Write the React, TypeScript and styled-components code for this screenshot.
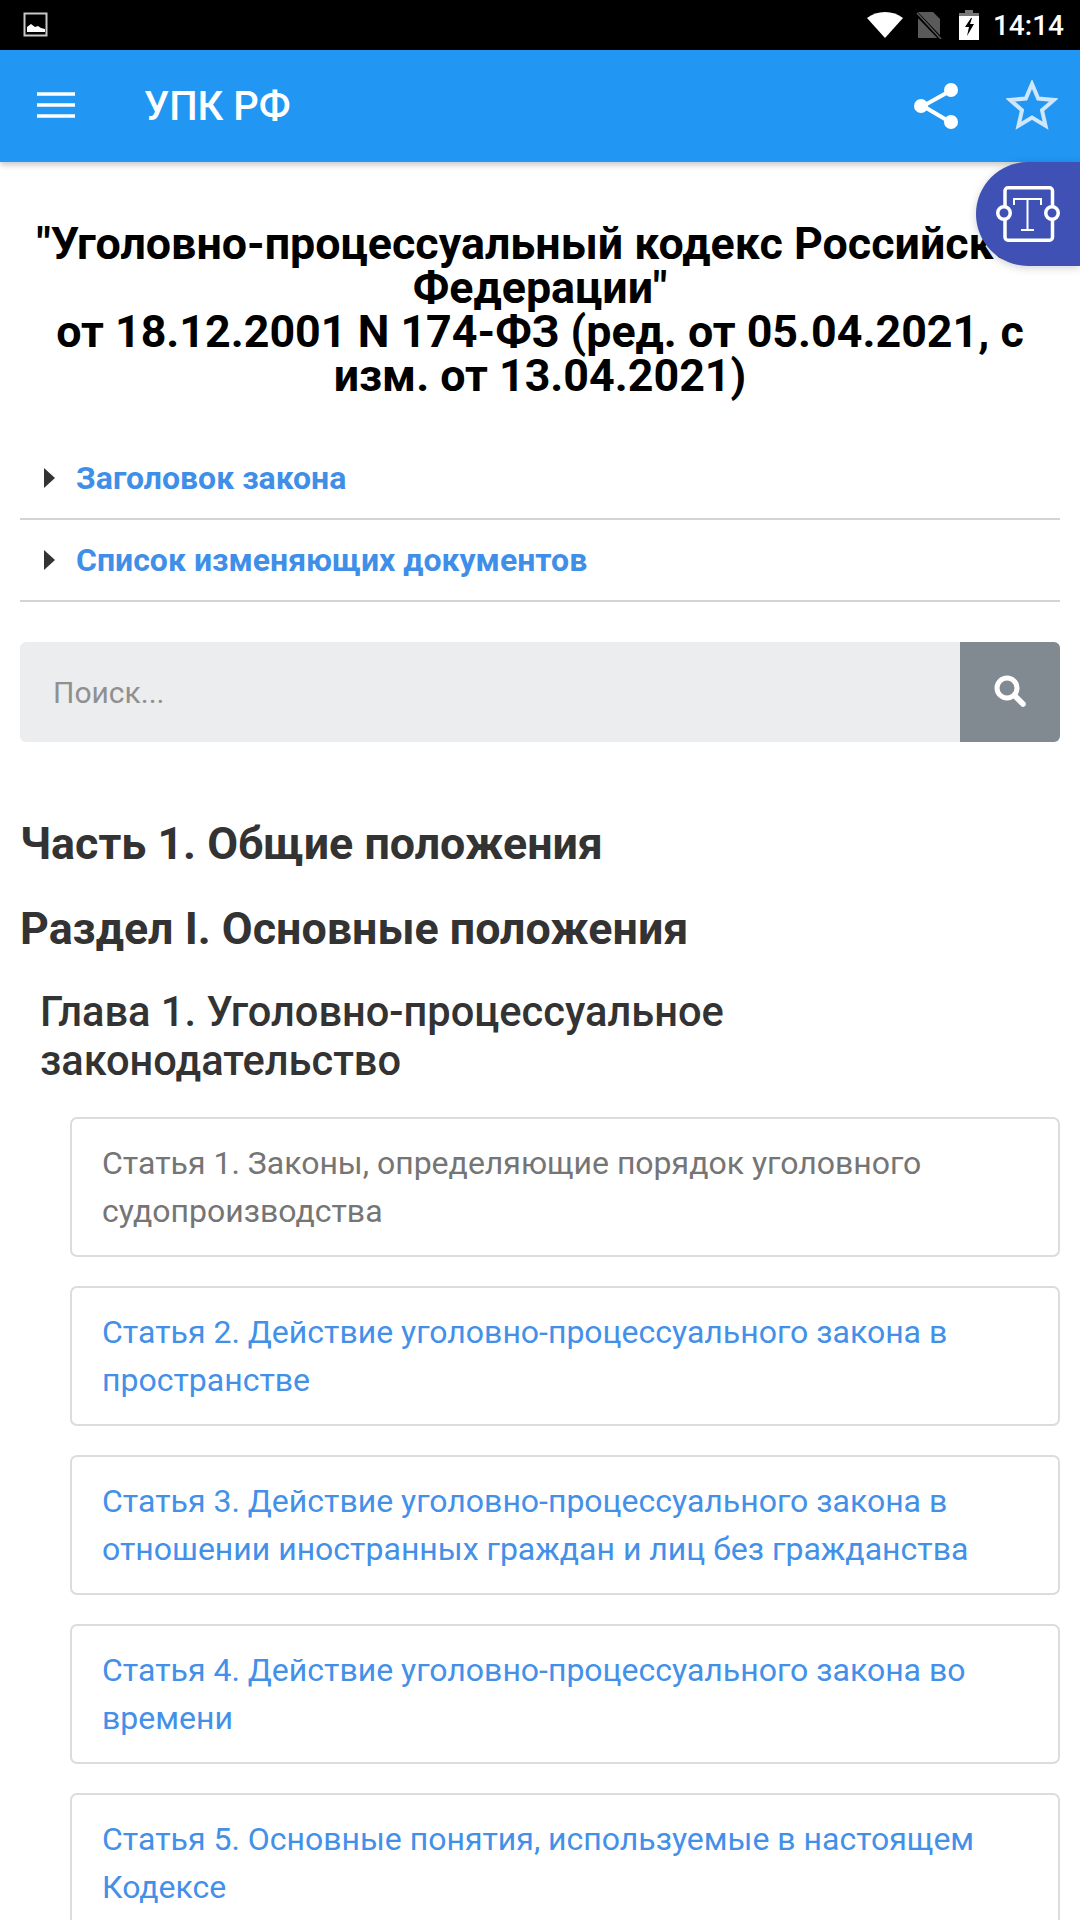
import React from "react";
import styled, { createGlobalStyle } from "styled-components";

const GlobalStyle = createGlobalStyle`
  html, body {
    margin: 0;
    padding: 0;
    background: #fff;
    font-family: Roboto, "Noto Sans", sans-serif;
  }
  * { box-sizing: border-box; }
`;

const Screen = styled.div`
  width: 1080px;
  height: 1920px;
  position: relative;
  overflow: hidden;
  background: #fff;
`;

const StatusBar = styled.div`
  height: 50px;
  background: #000;
  display: flex;
  align-items: center;
  padding: 0 16px 0 23px;
  color: #fff;
`;

const StatusRight = styled.div`
  margin-left: auto;
  display: flex;
  align-items: center;
`;

const StatusGlyph = styled.svg<{ $gap?: number }>`
  margin-left: ${(p) => p.$gap ?? 0}px;
`;

const Clock = styled.span`
  font-size: 28px;
  font-weight: 500;
  margin-left: 14px;
`;

const AppBar = styled.header`
  height: 112px;
  background: #2196f3;
  display: flex;
  align-items: center;
  padding: 0 0 0 37px;
  box-shadow: 0 3px 6px rgba(0, 0, 0, 0.22);
  position: relative;
  z-index: 2;
`;

const AppTitle = styled.div`
  color: #fff;
  font-size: 40px;
  font-weight: 500;
  margin-left: 69px;
`;

const AppActions = styled.div`
  margin-left: auto;
  display: flex;
  align-items: center;
  gap: 46px;
  padding-right: 22px;
`;

const StarGlyph = styled.svg`
  margin-top: -3px;
`;

const FloatingButton = styled.div`
  position: absolute;
  top: 162px;
  right: 0;
  width: 104px;
  height: 104px;
  background: #3f51b5;
  border-radius: 52px 0 0 52px;
  box-shadow: 0 2px 8px rgba(0, 0, 0, 0.18);
  display: flex;
  align-items: center;
  padding-left: 20px;
  z-index: 3;
`;

const Content = styled.main`
  padding: 0 20px;
`;

const DocTitle = styled.h1`
  margin: 60px 0 0;
  font-size: 44.8px;
  line-height: 44px;
  font-weight: 700;
  color: #000;
  text-align: center;
`;

const Spoiler = styled.div`
  height: 82px;
  border-bottom: 2px solid #d4d4d4;
  display: flex;
  align-items: center;
  padding: 0 0 0 24px;
`;

const SpoilerList = styled.div`
  margin-top: 40px;
`;

const Arrow = styled.span`
  width: 0;
  height: 0;
  border-style: solid;
  border-width: 10px 0 10px 11px;
  border-color: transparent transparent transparent #333;
  margin-right: 21px;
`;

const SpoilerLink = styled.span`
  color: #3f8fe8;
  font-size: 32px;
  font-weight: 700;
`;

const SearchBox = styled.div`
  margin-top: 40px;
  height: 100px;
  display: flex;
  border-radius: 6px;
  overflow: hidden;
`;

const SearchField = styled.div`
  flex: 1;
  background: #ecedef;
  color: #909090;
  font-size: 30px;
  display: flex;
  align-items: center;
  padding-left: 33px;
`;

const SearchButton = styled.div`
  width: 100px;
  background: #828a91;
  display: flex;
  align-items: center;
  justify-content: center;
`;

const PartHeading = styled.h2<{ $top: number }>`
  margin: ${(p) => p.$top}px 0 0;
  font-size: 44.8px;
  line-height: 48px;
  font-weight: 700;
  color: #333;
`;

const ChapterHeading = styled.h3`
  margin: 34px 0 0;
  padding-left: 20px;
  width: 800px;
  font-size: 41.6px;
  line-height: 49px;
  font-weight: 500;
  color: #333;
`;

const ArticleList = styled.div`
  margin: 32px 0 0 50px;
  display: flex;
  flex-direction: column;
  gap: 29px;
`;

const ArticleCard = styled.div<{ $visited?: boolean }>`
  border: 2px solid #dcdcdc;
  border-radius: 7px;
  padding: 20px 30px;
  font-size: 32px;
  line-height: 48px;
  color: ${(p) => (p.$visited ? "#757575" : "#4390e8")};
`;

const articles = [
  { text: "Статья 1. Законы, определяющие порядок уголовного судопроизводства", visited: true },
  { text: "Статья 2. Действие уголовно-процессуального закона в пространстве" },
  { text: "Статья 3. Действие уголовно-процессуального закона в отношении иностранных граждан и лиц без гражданства" },
  { text: "Статья 4. Действие уголовно-процессуального закона во времени" },
  { text: "Статья 5. Основные понятия, используемые в настоящем Кодексе" },
];

function ImageNoteIcon() {
  return (
    <svg width="26" height="26" viewBox="0 0 26 26">
      <rect x="1.5" y="1.5" width="22" height="22" fill="#000" stroke="#c8c8c8" strokeWidth="2" />
      <path d="M4 20v-5l4-3 4 3 3-1 3 2 4 1v3z" fill="#fff" />
    </svg>
  );
}

function WifiIcon() {
  return (
    <StatusGlyph width="36" height="28" viewBox="0 0 36 28">
      <path d="M0 7C5 3 11 1 18 1S31 3 36 7L18 27z" fill="#fff" />
    </StatusGlyph>
  );
}

function NoSimIcon() {
  return (
    <StatusGlyph $gap={13} width="26" height="28" viewBox="0 0 26 28">
      <path d="M2 1h15l7 7v19H2z" fill="#5a5a5a" />
      <path d="M0 2l25 26" stroke="#000" strokeWidth="4" />
      <path d="M1 2l24 26" stroke="#5a5a5a" strokeWidth="1.500" />
    </StatusGlyph>
  );
}

function BatteryIcon() {
  return (
    <StatusGlyph $gap={17} width="20" height="30" viewBox="0 0 20 30">
      <path d="M6 0h8v3h6v27H0V3h6z" fill="#fff" />
      <path d="M6 0h8v3h6v3H0V3h6z" fill="#777" />
      <path d="M12 8l-6 9h4l-2 9 7-12h-4l2-6z" fill="#000" />
    </StatusGlyph>
  );
}

function MenuIcon() {
  return (
    <svg width="38" height="28" viewBox="0 0 38 28">
      <path d="M0 2h38M0 13h38M0 24h38" stroke="#fff" strokeWidth="3.500" />
    </svg>
  );
}

function ShareIcon() {
  return (
    <svg width="46" height="48" viewBox="0 0 46 48">
      <path d="M36 9L9 24l27 16" fill="none" stroke="#fff" strokeWidth="4" />
      <circle cx="37" cy="8" r="7" fill="#fff" />
      <circle cx="7" cy="24" r="7" fill="#fff" />
      <circle cx="37" cy="40" r="7" fill="#fff" />
    </svg>
  );
}

function StarIcon() {
  return (
    <StarGlyph width="52" height="50" viewBox="0 0 52 50">
      <polygon
        points="26,4 32.200,18.500 47.900,19.900 36,30.200 39.500,45.600 26,37.500 12.500,45.600 16,30.200 4.100,19.900 19.800,18.500"
        fill="none"
        stroke="#cfe6fb"
        strokeWidth="4"
      />
    </StarGlyph>
  );
}

function TextToolIcon() {
  return (
    <svg width="66" height="66" viewBox="0 0 66 66">
      <rect x="9" y="6.750" width="47.500" height="52.500" rx="3" fill="none" stroke="#fff" strokeWidth="3.500" />
      <circle cx="8" cy="32" r="6.250" fill="#3f51b5" stroke="#fff" strokeWidth="3.500" />
      <circle cx="56" cy="32" r="6.250" fill="#3f51b5" stroke="#fff" strokeWidth="3.500" />
      <path d="M18 24v-6h27v6M31.500 18v31M25 49h13" fill="none" stroke="#fff" strokeWidth="2" />
    </svg>
  );
}

function SearchIcon() {
  return (
    <svg width="32" height="34" viewBox="0 0 32 34">
      <circle cx="13" cy="13" r="10" fill="none" stroke="#fff" strokeWidth="5" />
      <path d="M21 21l8 8" stroke="#fff" strokeWidth="5.500" strokeLinecap="round" />
    </svg>
  );
}

export default function App() {
  return (
    <Screen>
      <GlobalStyle />
      <StatusBar>
        <ImageNoteIcon />
        <StatusRight>
          <WifiIcon />
          <NoSimIcon />
          <BatteryIcon />
          <Clock>14:14</Clock>
        </StatusRight>
      </StatusBar>
      <AppBar>
        <MenuIcon />
        <AppTitle>УПК РФ</AppTitle>
        <AppActions>
          <ShareIcon />
          <StarIcon />
        </AppActions>
      </AppBar>
      <FloatingButton>
        <TextToolIcon />
      </FloatingButton>
      <Content>
        <DocTitle>
          "Уголовно-процессуальный кодекс Российской Федерации"
          <br />
          от 18.12.2001 N 174-ФЗ (ред. от 05.04.2021, с изм. от 13.04.2021)
        </DocTitle>
        <SpoilerList>
          <Spoiler>
            <Arrow />
            <SpoilerLink>Заголовок закона</SpoilerLink>
          </Spoiler>
          <Spoiler>
            <Arrow />
            <SpoilerLink>Список изменяющих документов</SpoilerLink>
          </Spoiler>
        </SpoilerList>
        <SearchBox>
          <SearchField>Поиск...</SearchField>
          <SearchButton>
            <SearchIcon />
          </SearchButton>
        </SearchBox>
        <PartHeading $top={78}>Часть 1. Общие положения</PartHeading>
        <PartHeading $top={37}>Раздел I. Основные положения</PartHeading>
        <ChapterHeading>Глава 1. Уголовно-процессуальное законодательство</ChapterHeading>
        <ArticleList>
          {articles.map((article, index) => (
            <ArticleCard key={index} $visited={article.visited}>
              {article.text}
            </ArticleCard>
          ))}
        </ArticleList>
      </Content>
    </Screen>
  );
}
